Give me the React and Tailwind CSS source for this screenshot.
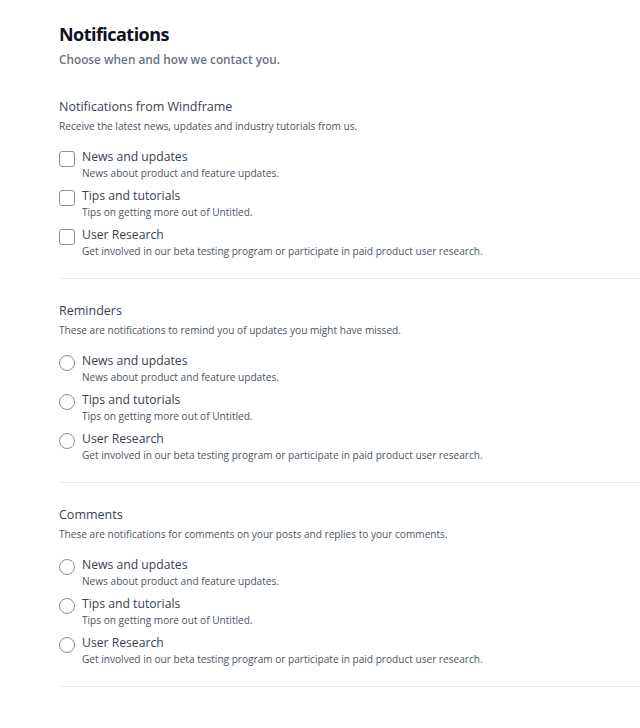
import React from "react";

const items = [
  { t: "News and updates", d: "News about product and feature updates." },
  { t: "Tips and tutorials", d: "Tips on getting more out of Untitled." },
  { t: "User Research", d: "Get involved in our beta testing program or participate in paid product user research." },
];

const sections = [
  { title: "Notifications from Windframe", desc: "Receive the latest news, updates and industry tutorials from us.", type: "checkbox" },
  { title: "Reminders", desc: "These are notifications to remind you of updates you might have missed.", type: "radio" },
  { title: "Comments", desc: "These are notifications for comments on your posts and replies to your comments.", type: "radio" },
];

function Control({ type }) {
  if (type === "checkbox") {
    return <span className="mt-[3px] block h-4 w-4 shrink-0 rounded-[3px] border border-[#8a8f98] bg-white" />;
  }
  return <span className="mt-[3px] block h-4 w-4 shrink-0 rounded-full border border-[#8a8f98] bg-white" />;
}

export default function App() {
  return (
    <div className="min-h-[728px] bg-white pl-[59px] pt-[21px]" style={{ fontFamily: '"Open Sans", "Noto Sans", sans-serif' }}>
      <h1 className="text-[18px] font-bold leading-[26px] tracking-[-0.03em] text-[#0f1222]">Notifications</h1>
      <p className="mt-[3px] text-[11.8px] font-semibold leading-[18px] text-[#6b7280]">Choose when and how we contact you.</p>
      <div className="mt-[29px]">
        {sections.map((s, i) => (
          <div key={i} className="mb-[22px] border-b border-[#e5e7eb] pb-[20px]">
            <h2 className="text-[12.5px] font-medium leading-[20px] text-[#374151]">{s.title}</h2>
            <p className="text-[10.1px] leading-[18px] text-[#4b5563]">{s.desc}</p>
            <div className="mt-[13px] flex flex-col gap-[7px]">
              {items.map((it, j) => (
                <div key={j} className="flex gap-[7px]">
                  <Control type={s.type} />
                  <div>
                    <div className="text-[12.2px] leading-[18px] text-[#374151]">{it.t}</div>
                    <div className="text-[10.1px] leading-[14px] text-[#4b5563]">{it.d}</div>
                  </div>
                </div>
              ))}
            </div>
          </div>
        ))}
      </div>
    </div>
  );
}
